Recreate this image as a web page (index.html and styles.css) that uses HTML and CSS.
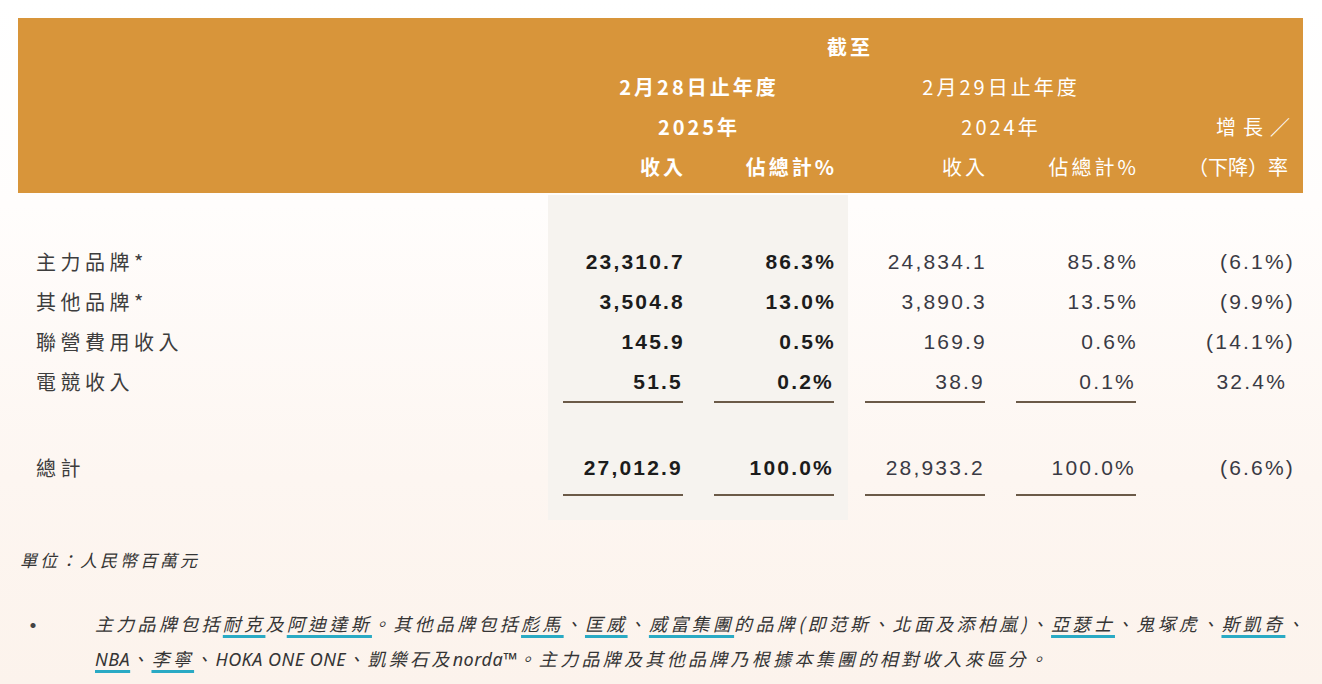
FILE: index.html
```html
<!DOCTYPE html>
<html lang="zh-Hant">
<head>
<meta charset="utf-8">
<title>收入分析</title>
<link rel="stylesheet" href="styles.css">
</head>
<body>
<div class="page">
  <div class="table">
    <div class="head">
      <div class="h-row">
        <div class="c span4 center bold">截至</div>
      </div>
      <div class="h-row">
        <div class="c span2 center bold">2月28日止年度</div>
        <div class="c span2 center">2月29日止年度</div>
      </div>
      <div class="h-row">
        <div class="c span2 center bold">2025年</div>
        <div class="c span2 center">2024年</div>
        <div class="c right growth">增長／</div>
      </div>
      <div class="h-row">
        <div class="c right bold">收入</div>
        <div class="c right bold">佔總計%</div>
        <div class="c right">收入</div>
        <div class="c right">佔總計%</div>
        <div class="c right rate">（下降）率</div>
      </div>
    </div>

    <div class="body">
      <div class="b-row">
        <div class="label">主力品牌*</div>
        <div class="num bold">23,310.7</div>
        <div class="num bold">86.3%</div>
        <div class="num">24,834.1</div>
        <div class="num">85.8%</div>
        <div class="num neg">(6.1%)</div>
      </div>
      <div class="b-row">
        <div class="label">其他品牌*</div>
        <div class="num bold">3,504.8</div>
        <div class="num bold">13.0%</div>
        <div class="num">3,890.3</div>
        <div class="num">13.5%</div>
        <div class="num neg">(9.9%)</div>
      </div>
      <div class="b-row">
        <div class="label">聯營費用收入</div>
        <div class="num bold">145.9</div>
        <div class="num bold">0.5%</div>
        <div class="num">169.9</div>
        <div class="num">0.6%</div>
        <div class="num neg">(14.1%)</div>
      </div>
      <div class="b-row sub">
        <div class="label">電競收入</div>
        <div class="num bold"><span class="ul">51.5</span></div>
        <div class="num bold"><span class="ul">0.2%</span></div>
        <div class="num"><span class="ul">38.9</span></div>
        <div class="num"><span class="ul">0.1%</span></div>
        <div class="num pos">32.4%</div>
      </div>
      <div class="b-row total">
        <div class="label">總計</div>
        <div class="num bold"><span class="ul">27,012.9</span></div>
        <div class="num bold"><span class="ul">100.0%</span></div>
        <div class="num"><span class="ul">28,933.2</span></div>
        <div class="num"><span class="ul">100.0%</span></div>
        <div class="num neg">(6.6%)</div>
      </div>
    </div>
  </div>

  <div class="notes">
    <p class="unit">單位：人民幣百萬元</p>
    <div class="foot">
      <span class="bullet">•</span>
      <p class="foot-text">主力品牌包括<u>耐克</u>及<u>阿迪達斯</u>。其他品牌包括<u>彪馬</u>、<u>匡威</u>、<u>威富集團</u>的品牌(即范斯、北面及添柏嵐)、<u>亞瑟士</u>、鬼塚虎、<u>斯凱奇</u>、<br><u class="lat">NBA</u>、<u>李寧</u>、<span class="lat">HOKA ONE ONE</span>、凱樂石及<span class="lat">norda™</span>。主力品牌及其他品牌乃根據本集團的相對收入來區分。</p>
    </div>
  </div>
</div>
</body>
</html>
```

FILE: styles.css
```css
* { box-sizing: border-box; }

html, body {
  margin: 0;
  padding: 0;
}

body {
  width: 1322px;
  height: 684px;
  overflow: hidden;
  background: linear-gradient(180deg, #ffffff 0%, #fffdfc 30%, #fdf6f1 70%, #fcf3ec 100%);
  font-family: "Noto Sans CJK TC", "Noto Sans", sans-serif;
}

.page {
  padding-top: 18px;
}

.table {
  margin-left: 18px;
  width: 1285px;
}

.head {
  background: #d8953a;
  color: #ffffff;
  padding: 9px 0 6px;
  font-size: 20px;
  letter-spacing: 3px;
}

.h-row,
.b-row {
  display: grid;
  grid-template-columns: 530px repeat(5, 151px);
}

.h-row {
  height: 40px;
  line-height: 40px;
}

.h-row .c { white-space: nowrap; }
.h-row .span4 { grid-column: 2 / 6; }
.h-row .span2:first-child { grid-column: 2 / 4; }
.h-row .span2 + .span2 { grid-column: 4 / 6; }
.h-row .right:first-child { grid-column: 2; }
.h-row .right { padding-right: 13px; }
.h-row .growth {
  grid-column: 6;
  letter-spacing: 7px;
  padding-right: 6px;
}
.h-row .rate {
  letter-spacing: 0;
  padding-right: 15px;
}

.center { text-align: center; }
.right { text-align: right; }
.bold { font-weight: 700; }

.body {
  margin-top: 2px;
  padding: 47px 0 24px;
  background: linear-gradient(90deg, transparent 530px, #f6f3ef 530px, #f6f3ef 830px, transparent 830px);
}

.b-row {
  height: 40px;
  line-height: 40px;
}

.label {
  padding-left: 18px;
  font-size: 20px;
  letter-spacing: 4.5px;
  color: #3d3d3d;
}

.num {
  font-family: "Liberation Sans", Arial, sans-serif;
  font-size: 21px;
  letter-spacing: 2.2px;
  text-align: right;
  padding-right: 14px;
  color: #3a3a44;
}

.num.bold {
  color: #1c1c1c;
}

.num.neg { padding-right: 8px; }
.num.pos { padding-right: 16px; }

.ul {
  display: inline-block;
  width: 120px;
  margin-right: 2px;
  border-bottom: 2px solid #6b5a48;
}

.b-row.sub .ul {
  line-height: 38px;
}

.b-row.total {
  margin-top: 40px;
  height: 54px;
  line-height: 52px;
}

.b-row.total .ul {
  line-height: 52px;
}

.notes {
  padding-left: 20px;
  font-style: italic;
  color: #353535;
}

.unit {
  margin: 25px 0 0;
  font-size: 17px;
  letter-spacing: 3px;
  line-height: 30px;
}

.foot {
  display: flex;
  margin-top: 31px;
}

.bullet {
  font-style: normal;
  width: 75px;
  padding-left: 1px;
  font-size: 24px;
  line-height: 35px;
  color: #444;
}

.foot-text {
  margin: 0;
  font-size: 18px;
  letter-spacing: 3.3px;
  line-height: 35px;
  white-space: nowrap;
}

.foot-text .lat {
  font-family: "Noto Sans", sans-serif;
  letter-spacing: 0.5px;
}

.foot-text u {
  text-decoration: underline;
  text-decoration-color: #2aaac4;
  text-decoration-thickness: 3px;
  text-underline-offset: 4px;
}
```
